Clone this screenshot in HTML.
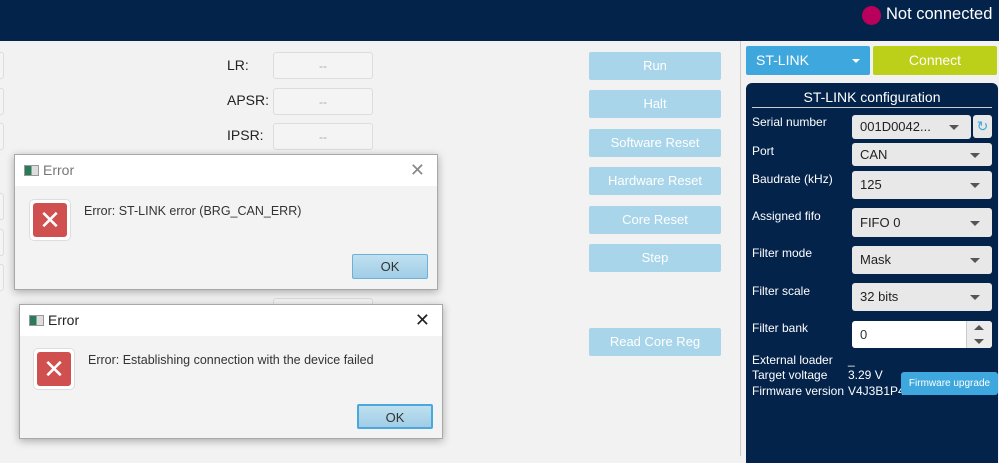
<!DOCTYPE html><html><head><style>
*{margin:0;padding:0;box-sizing:border-box}
body{width:999px;height:456px;background:#f2f2f2;font-family:"Liberation Sans",sans-serif;position:relative;overflow:hidden;font-size:13px;color:#333}
.a{position:absolute}
.inp{position:absolute;background:#f4f4f4;border:1px solid #ddd;border-radius:3px;color:#aaa;text-align:center;line-height:26px;font-size:12px}
.lbl{position:absolute;font-size:14px;color:#222}
.btn{position:absolute;left:589px;width:132px;height:28px;background:#a8d5ea;border-radius:2px;color:#fff;text-align:center;line-height:28px;font-size:13px}
.dlg{position:absolute;background:#f3f3f3;border:1px solid #a8a8a8;box-shadow:0 2px 8px rgba(0,0,0,.3)}
.tb{height:31px;background:#fff;position:relative;font-size:14px;line-height:31px;padding-left:28px;color:#777}
.ic{position:absolute;width:42px;height:42px;border:1px solid #ddd;border-radius:5px;background:#fff;padding:3px}
.ic div{width:100%;height:100%;background:#d0504f;border-radius:3px;color:#fff;font-size:26px;line-height:34px;text-align:center}
.ok{position:absolute;width:76px;height:25px;background:linear-gradient(#bfe0f0,#a0cde6);border:1px solid #6fb0d6;border-radius:2px;text-align:center;line-height:23px;font-size:13px}
.cl{position:absolute;left:752px;color:#fff;font-size:12px}
.cb{position:absolute;left:852px;width:140px;background:#e8e8e8;border-radius:3px;font-size:13px;padding-left:8px;color:#222}
.cb:after{content:"";position:absolute;right:12px;top:50%;margin-top:-2px;border:5px solid transparent;border-top-color:#555;border-bottom:0}
</style></head><body>
<div class="a" style="left:0;top:0;width:999px;height:41px;background:#03234b"></div>
<div class="a" style="left:862px;top:6px;width:19px;height:19px;border-radius:50%;background:#b8005c"></div>
<div class="a" style="left:886px;top:5px;color:#fff;font-size:16.5px">Not connected</div>
<div class="a" style="left:740px;top:41px;width:1px;height:415px;background:#ccc"></div>
<div class="inp" style="left:-10px;top:52px;width:14px;height:27px"></div>
<div class="inp" style="left:-10px;top:88px;width:14px;height:27px"></div>
<div class="inp" style="left:-10px;top:123px;width:14px;height:27px"></div>
<div class="inp" style="left:-10px;top:193px;width:14px;height:27px"></div>
<div class="inp" style="left:-10px;top:229px;width:14px;height:27px"></div>
<div class="inp" style="left:-10px;top:264px;width:14px;height:27px"></div>
<div class="lbl" style="left:227px;top:57px">LR:</div>
<div class="lbl" style="left:227px;top:92px">APSR:</div>
<div class="lbl" style="left:227px;top:127px">IPSR:</div>
<div class="inp" style="left:273px;top:52px;width:100px;height:27px">--</div>
<div class="inp" style="left:273px;top:88px;width:100px;height:27px">--</div>
<div class="inp" style="left:273px;top:123px;width:100px;height:27px">--</div>
<div class="inp" style="left:273px;top:298px;width:100px;height:27px"></div>
<div class="btn" style="top:52px">Run</div>
<div class="btn" style="top:90px">Halt</div>
<div class="btn" style="top:129px">Software Reset</div>
<div class="btn" style="top:167px">Hardware Reset</div>
<div class="btn" style="top:206px">Core Reset</div>
<div class="btn" style="top:244px">Step</div>
<div class="btn" style="top:328px">Read Core Reg</div>

<div class="dlg" style="left:14px;top:154px;width:424px;height:136px">
<div class="tb"><span class="a" style="left:9px;top:10px;width:15px;height:11px;border:1px solid #999;background:linear-gradient(90deg,#2a7a5a 50%,#ddd 50%)"></span>Error<span class="a" style="right:12px;top:0;font-size:18px;color:#888">✕</span></div>
<div class="ic" style="left:14px;top:44px"><div>✕</div></div>
<div class="a" style="left:69px;top:49px;font-size:12.5px">Error: ST-LINK error (BRG_CAN_ERR)</div>
<div class="ok" style="left:337px;top:99px">OK</div>
</div>
<div class="dlg" style="left:19px;top:304px;width:424px;height:135px">
<div class="tb" style="color:#222"><span class="a" style="left:9px;top:10px;width:15px;height:11px;border:1px solid #999;background:linear-gradient(90deg,#2a7a5a 50%,#ddd 50%)"></span>Error<span class="a" style="right:12px;top:0;font-size:18px;color:#222">✕</span></div>
<div class="ic" style="left:13px;top:43px"><div>✕</div></div>
<div class="a" style="left:68px;top:48px;font-size:12.5px">Error: Establishing connection with the device failed</div>
<div class="ok" style="left:337px;top:99px;border:2px solid #4aa8dc">OK</div>
</div>

<div class="a" style="left:746px;top:46px;width:124px;height:29px;background:#3ea8de;border-radius:2px;color:#fff;font-size:14px;line-height:29px;padding-left:10px">ST-LINK<span class="a" style="right:10px;top:13px;border:4px solid transparent;border-top-color:#fff"></span></div>
<div class="a" style="left:873px;top:46px;width:124px;height:29px;background:#bccf19;border-radius:2px;color:#fff;font-size:14px;line-height:29px;text-align:center">Connect</div>
<div class="a" style="left:746px;top:83px;width:252px;height:380px;background:#03234b;border-radius:6px 6px 0 0"></div>
<div class="a" style="left:746px;top:89px;width:252px;text-align:center;color:#fff;font-size:14px">ST-LINK configuration</div>
<div class="a" style="left:752px;top:107px;width:240px;height:1px;background:#ccc"></div>
<div class="cl" style="top:115px">Serial number</div>
<div class="cb" style="top:115px;width:119px;height:24px;line-height:24px">001D0042...</div>
<div class="a" style="left:973px;top:115px;width:19px;height:23px;background:#e8e8e8;border-radius:3px;color:#3ea8de;font-size:14px;text-align:center;line-height:23px">↻</div>
<div class="cl" style="top:144px">Port</div>
<div class="cb" style="top:143px;height:23px;line-height:23px">CAN</div>
<div class="cl" style="top:172px">Baudrate (kHz)</div>
<div class="cb" style="top:171px;height:28px;line-height:28px">125</div>
<div class="cl" style="top:209px">Assigned fifo</div>
<div class="cb" style="top:208px;height:29px;line-height:29px">FIFO 0</div>
<div class="cl" style="top:246px">Filter mode</div>
<div class="cb" style="top:246px;height:28px;line-height:28px">Mask</div>
<div class="cl" style="top:284px">Filter scale</div>
<div class="cb" style="top:283px;height:28px;line-height:28px">32 bits</div>
<div class="cl" style="top:321px">Filter bank</div>
<div class="a" style="left:852px;top:321px;width:140px;height:27px;background:#fff;border-radius:3px;font-size:13px;padding-left:8px;line-height:27px">0</div>
<div class="a" style="left:966px;top:321px;width:26px;height:27px;background:#ececec;border-left:1px solid #ccc;border-radius:0 3px 3px 0"></div>
<div class="a" style="left:974px;top:325px;border:5px solid transparent;border-bottom-color:#555;border-top:0"></div>
<div class="a" style="left:974px;top:339px;border:5px solid transparent;border-top-color:#555;border-bottom:0"></div>
<div class="cl" style="top:353px">External loader</div>
<div class="cl" style="top:368px">Target voltage</div>
<div class="cl" style="top:384px">Firmware version</div>
<div class="cl" style="left:848px;top:353px">_</div>
<div class="cl" style="left:848px;top:368px">3.29 V</div>
<div class="cl" style="left:848px;top:384px">V4J3B1P4</div>
<div class="a" style="left:901px;top:372px;width:97px;height:23px;background:#3ea8de;border-radius:3px;color:#fff;font-size:10px;line-height:23px;text-align:center">Firmware upgrade</div>
</body></html>
